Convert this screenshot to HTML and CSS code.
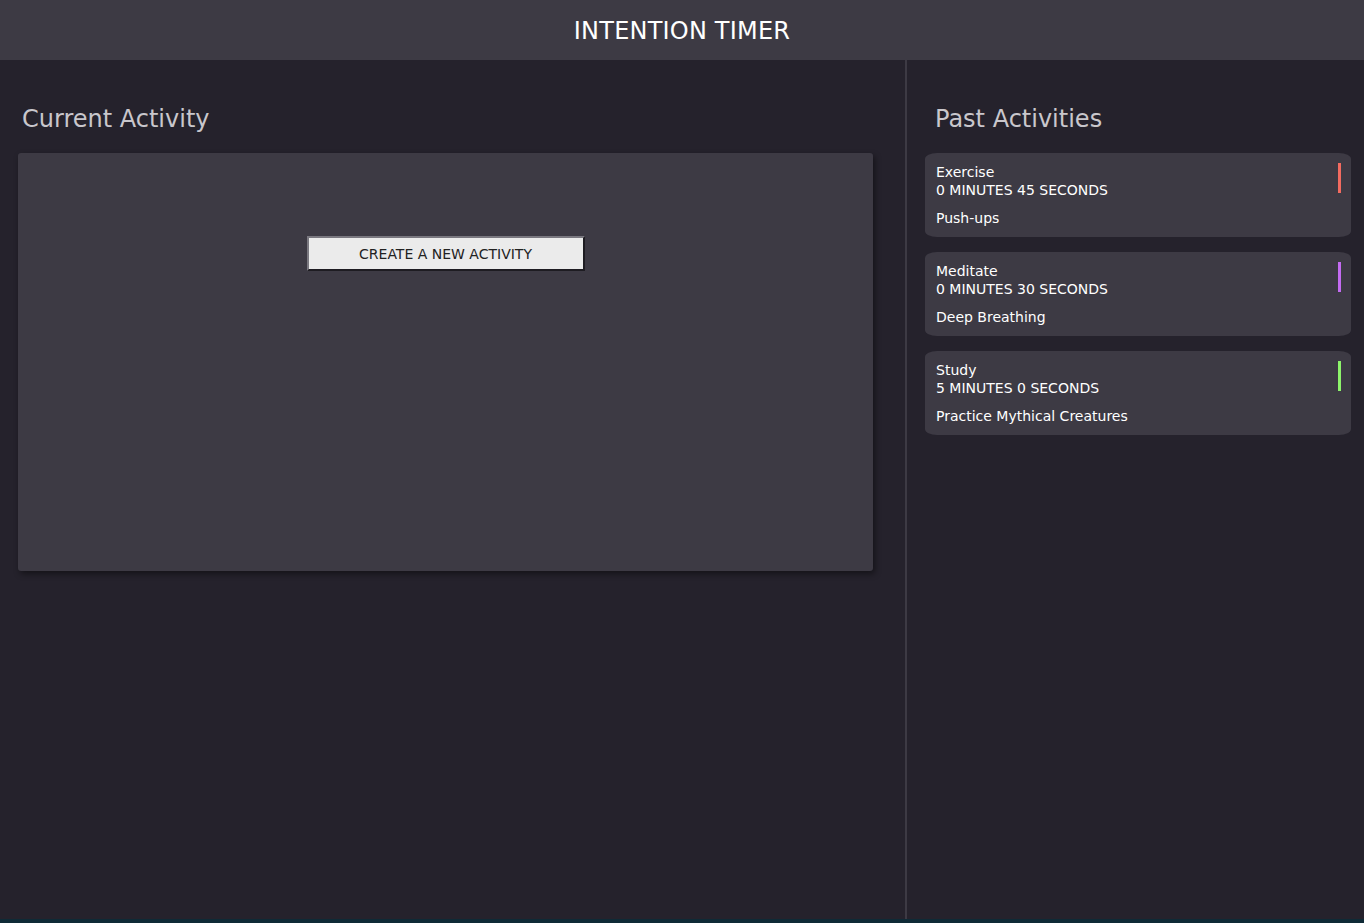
FILE: index.html
```html
<!DOCTYPE html>
<html>
<head>
<meta charset="utf-8">
<link rel="stylesheet" href="styles.css">
<title>Intention Timer</title>
</head>
<body>
<div class="app">
  <header class="topbar"><h1>INTENTION TIMER</h1></header>
  <main class="main">
    <section class="current">
      <h2 class="section-title">Current Activity</h2>
      <div class="current-card">
        <button class="create-btn">CREATE A NEW ACTIVITY</button>
      </div>
    </section>
    <aside class="past">
      <h2 class="section-title">Past Activities</h2>
      <div class="past-list">
        <div class="past-card">
          <div class="past-text">
            <p class="cat">Exercise</p>
            <p class="time">0 MINUTES 45 SECONDS</p>
            <p class="desc">Push-ups</p>
          </div>
          <span class="bar bar-exercise"></span>
        </div>
        <div class="past-card">
          <div class="past-text">
            <p class="cat">Meditate</p>
            <p class="time">0 MINUTES 30 SECONDS</p>
            <p class="desc">Deep Breathing</p>
          </div>
          <span class="bar bar-meditate"></span>
        </div>
        <div class="past-card">
          <div class="past-text">
            <p class="cat">Study</p>
            <p class="time">5 MINUTES 0 SECONDS</p>
            <p class="desc">Practice Mythical Creatures</p>
          </div>
          <span class="bar bar-study"></span>
        </div>
      </div>
    </aside>
  </main>
</div>
</body>
</html>
```
FILE: styles.css
```css
* { box-sizing: border-box; }
html, body { margin: 0; padding: 0; }
body {
  background: #0f2a36;
  font-family: "DejaVu Sans", "Open Sans", sans-serif;
  color: #ffffff;
  height: 923px;
  overflow: hidden;
}
.app {
  height: 919px;
  display: flex;
  flex-direction: column;
  background: #25222c;
}
.topbar {
  height: 60px;
  padding-top: 2px;
  background: #3d3a44;
  display: flex;
  align-items: center;
  justify-content: center;
}
.topbar h1 {
  margin: 0;
  font-size: 24px;
  font-weight: 400;
  letter-spacing: 0.2px;
  color: #ffffff;
}
.main {
  flex: 1;
  display: flex;
}
.current {
  width: 907px;
  border-right: 2px solid #3d3a44;
  padding: 0 32px 0 18px;
}
.past {
  flex: 1;
  padding: 0 13px 0 18px;
}
.section-title {
  margin: 0;
  height: 93px;
  padding-top: 44px;
  font-size: 24px;
  font-weight: 400;
  color: #c9c7cc;
  line-height: 30px;
}
.current .section-title { padding-left: 4px; }
.past .section-title { padding-left: 10px; }
.current-card {
  height: 418px;
  background: #3d3a44;
  border-radius: 3px;
  box-shadow: 2px 3px 6px rgba(0,0,0,0.45);
  display: flex;
  justify-content: center;
  align-items: flex-start;
  padding-top: 83px;
}
.create-btn {
  width: 278px;
  height: 35px;
  background: #ebebeb;
  border: 2px solid;
  border-color: #7a7880 #1e1c22 #1e1c22 #7a7880;
  font-family: inherit;
  font-size: 14px;
  color: #222;
  padding: 0;
}
.past-list {
  display: flex;
  flex-direction: column;
  gap: 15px;
}
.past-card {
  height: 84px;
  background: #3d3a44;
  border-radius: 12px / 6px;
  display: flex;
  justify-content: space-between;
  padding: 10px 10px 0 11px;
}
.past-text p {
  margin: 0;
  font-size: 14px;
  line-height: 18px;
}
.past-text .desc { margin-top: 10px; }
.bar {
  width: 3px;
  height: 30px;
}
.bar-exercise { background: #f36b60; }
.bar-meditate { background: #c46bf2; }
.bar-study { background: #8df46b; }
```
